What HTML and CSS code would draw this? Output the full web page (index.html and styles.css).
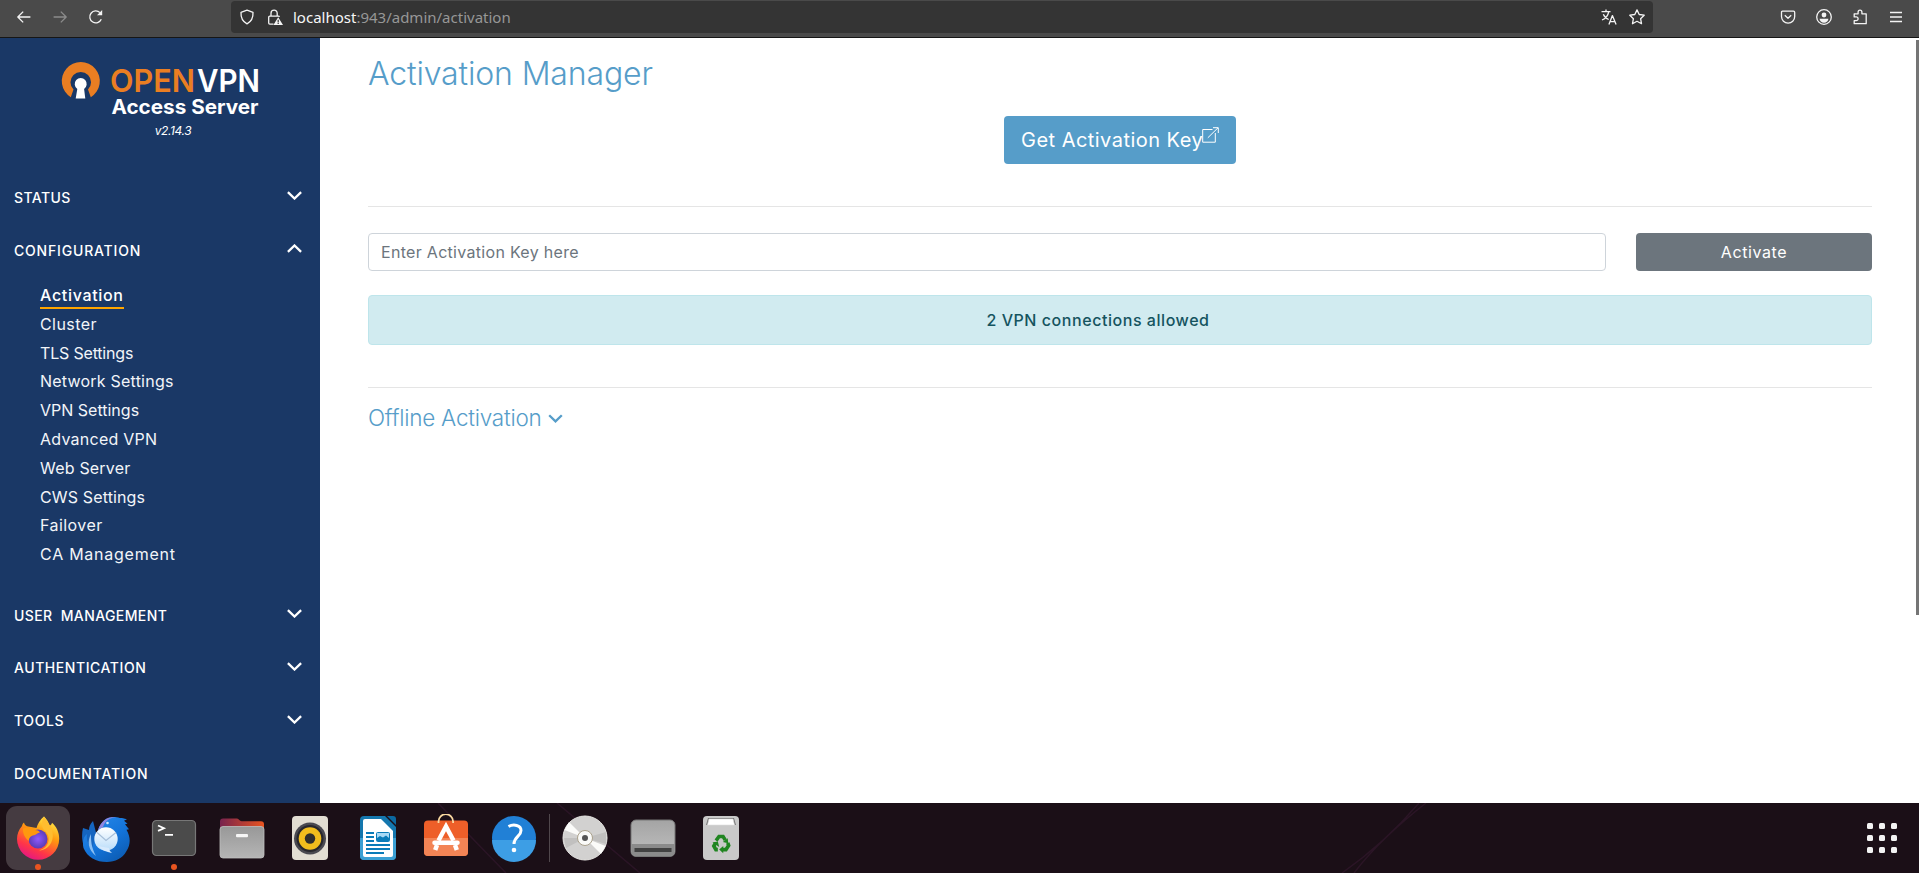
FILE: index.html
```html
<!DOCTYPE html>
<html lang="en">
<head>
<meta charset="utf-8">
<title>Activation Manager</title>
<link rel="stylesheet" href="styles.css">
</head>
<body>
<div class="screen">
  <header class="toolbar">
    <nav class="nav-buttons">
      <svg class="icon" viewBox="0 0 16 16"><path d="M14.4 8H2M7.2 2.6 1.8 8l5.4 5.4"/></svg>
      <svg class="icon icon-dim" viewBox="0 0 16 16"><path d="M1.6 8H14M8.8 2.6 14.2 8l-5.400 5.400"/></svg>
      <svg class="icon" viewBox="0 0 16 16"><path d="M13.300 10.300A6 6 0 1 1 12 3.600"/><path class="solid" d="M14.200 1v5.200H9z"/></svg>
    </nav>
    <div class="urlbar">
      <svg class="icon" viewBox="0 0 16 16"><path d="M8 1.200 14 3.300c.3 5.200-1.500 9.200-6 11.600C3.500 12.500 1.700 8.500 2 3.300z"/></svg>
      <svg class="icon lock" viewBox="0 0 16 16"><path d="M4 7V4.200a3 3 0 0 1 6.200 0V7M6.500 15.200H2.800a1.100 1.100 0 0 1-1.100-1.100V8.200A1.100 1.100 0 0 1 2.800 7.100h8.600a1 1 0 0 1 1 .8"/><path class="solid" fill-rule="evenodd" d="M11.200 8.200 16 16H6.400zM10.600 10.800v2.400h1.200v-2.400zm0 3v1.100h1.200v-1.100z"/></svg>
      <span class="url"><b>localhost</b>:943/admin/activation</span>
      <svg class="icon translate" viewBox="0 0 16 16"><path d="M.5 2.600h9M5 .6v2M2.300 5.200c1.200 2.700 3.200 4.500 5.400 5.300M7.700 2.800C7 6.500 4.500 9.500 1 11M7.900 15.400l3.500-8.800 3.700 8.800M9 12.600h5"/></svg>
      <svg class="icon" viewBox="0 0 16 16"><path d="m8 .9 2.200 4.600 5 .7-3.600 3.500.9 5L8 12.300l-4.500 2.400.9-5L.8 6.200l5-.7z"/></svg>
    </div>
    <div class="tools">
      <svg class="icon" viewBox="0 0 16 16"><path d="M2.500 2.200h11c.7 0 1.200.5 1.200 1.200v4.200a6.600 6.600 0 0 1-13.200 0V3.400c0-.7.4-1.200 1-1.200zM4.800 6.300 8 9.300l3.200-3"/></svg>
      <svg class="icon" viewBox="0 0 16 16"><circle cx="8" cy="8" r="7.300"/><circle class="solid" cx="8" cy="6" r="2.400"/><path class="solid" d="M3.600 9.800h8.800c0 2.300-2 4-4.400 4s-4.400-1.700-4.400-4z"/></svg>
      <svg class="icon" viewBox="0 0 16 16"><path d="M2.200 4.800h3.900V3a1.900 1.900 0 0 1 3.800 0v1.800h4.300v9.900h-12v-3h2a1.900 1.900 0 0 0 0-3.800h-2z"/></svg>
      <svg class="icon" viewBox="0 0 16 16"><path d="M2 3.500h12M2 8h12M2 12.500h12"/></svg>
    </div>
  </header>

  <div class="page">
    <aside class="sidebar">
      <svg class="logo" viewBox="0 0 320 90">
        <path fill="#ea7e22" d="M70.800 59.200A19 19 0 1 1 90.800 59.200L88 51.500A10.300 10.300 0 1 0 73.500 51.500Z"/>
        <path fill="#fff" d="M77.300 51a6 6 0 1 1 6.800 0L85.300 60.500h-9.600z"/>
        <text class="word" x="110" y="54" textLength="85" lengthAdjust="spacingAndGlyphs" fill="#ea7e22">OPEN</text>
        <text class="word" x="197" y="54" textLength="63" lengthAdjust="spacingAndGlyphs" fill="#fff">VPN</text>
        <text class="product" x="111.500" y="75.500" textLength="147" lengthAdjust="spacingAndGlyphs">Access Server</text>
      </svg>
      <div class="version">v2.14.3</div>
      <ul class="menu">
        <li class="group"><span class="t-status">STATUS</span><svg class="chev" viewBox="0 0 15 9"><path d="M.9 1.100 7.500 7.500 14.100 1.100"/></svg></li>
        <li class="group"><span class="t-config">CONFIGURATION</span><svg class="chev" viewBox="0 0 15 9"><path d="M.9 7.900 7.500 1.500 14.100 7.900"/></svg></li>
        <li>
          <ul class="submenu">
            <li><a class="active">Activation</a></li>
            <li><a class="s-cluster">Cluster</a></li>
            <li><a class="s-tls">TLS Settings</a></li>
            <li><a class="s-network">Network Settings</a></li>
            <li><a class="s-vpn">VPN Settings</a></li>
            <li><a class="s-advanced">Advanced VPN</a></li>
            <li><a class="s-web">Web Server</a></li>
            <li><a class="s-cws">CWS Settings</a></li>
            <li><a class="s-failover">Failover</a></li>
            <li><a class="s-ca">CA Management</a></li>
          </ul>
        </li>
        <li class="group"><span class="t-user">USER MANAGEMENT</span><svg class="chev" viewBox="0 0 15 9"><path d="M.9 1.100 7.500 7.500 14.100 1.100"/></svg></li>
        <li class="group"><span class="t-auth">AUTHENTICATION</span><svg class="chev" viewBox="0 0 15 9"><path d="M.9 1.100 7.500 7.500 14.100 1.100"/></svg></li>
        <li class="group"><span class="t-tools">TOOLS</span><svg class="chev" viewBox="0 0 15 9"><path d="M.9 1.100 7.500 7.500 14.100 1.100"/></svg></li>
        <li class="group"><span class="t-docs">DOCUMENTATION</span></li>
      </ul>
    </aside>

    <main class="content">
      <h1>Activation Manager</h1>
      <a class="get-key"><span>Get Activation Key</span><svg viewBox="0 0 17 16"><path d="M10.500 2.500H.7v12.700h12.600V6M5.800 10.800 16 .8M11 .7h5.300V6"/></svg></a>
      <hr>
      <div class="key-row">
        <div class="key-input">Enter Activation Key here</div>
        <div class="activate">Activate</div>
      </div>
      <div class="alert">2 VPN connections allowed</div>
      <hr>
      <h2><span>Offline Activation</span><svg viewBox="0 0 15 9"><path d="M1.200 1.200 7.500 7.400 13.800 1.200"/></svg></h2>
    </main>
    <div class="scrollbar"></div>
  </div>

  <footer class="dock">
    <svg class="dock-lines" viewBox="0 0 1919 70"><path d="M438 0 506 70M557 0 640 70M1419 0Q1385 40 1342 70M1426 0Q1380 36 1354 70"/></svg>
    <div class="app focused running">
      <svg viewBox="0 0 48 48">
        <defs>
          <linearGradient id="fx" x1=".8" y1="0" x2=".3" y2="1"><stop offset="0" stop-color="#fff44f"/><stop offset=".4" stop-color="#ff980e"/><stop offset=".75" stop-color="#ff3647"/><stop offset="1" stop-color="#e31587"/></linearGradient>
          <radialGradient id="fp"><stop offset="0" stop-color="#9059ff"/><stop offset="1" stop-color="#5b3cb5"/></radialGradient>
        </defs>
        <path fill="url(#fx)" d="M30 2.500c2.500 2.500 5 6 5.400 9.300 1.600-.4 2.300-1.700 2.600-3 4.500 4 7.200 9.500 7.200 16A21 21 0 0 1 24 45.800 21 21 0 0 1 3 25c0-5 1.600-9 5-13 .3-1.400.8-2.500 2-3.500.4 1.700 1.300 3 3 3.800l9.500 1.700C23.500 10 26 5.500 30 2.500z"/>
        <circle cx="24" cy="25" r="9.500" fill="url(#fp)"/>
        <path fill="#ff980e" d="M9 14.500c5-2 9-1 12 1.500 2 0 4.300.8 5 2.500-3 .5-4 2.500-6 2.700-3.500.4-5 3-5.300 5.800C11 24 8.500 19.500 9 14.500z"/>
        <path fill="#ffbd2f" d="M30 2.500c2.500 5 9.500 10 8.800 20-.5 9-7.800 14-13.800 14 11-3 12-14 6.500-19C27 13.500 27 8 30 2.500z"/>
      </svg>
    </div>
    <div class="app">
      <svg viewBox="0 0 48 48">
        <defs><linearGradient id="tb" x1="0" y1="0" x2=".7" y2="1"><stop offset="0" stop-color="#2a8bea"/><stop offset=".6" stop-color="#1373d9"/><stop offset="1" stop-color="#0d5db5"/></linearGradient><linearGradient id="mail" x1="0" y1="0" x2="0" y2="1"><stop offset="0" stop-color="#fff"/><stop offset="1" stop-color="#b9dcfa"/></linearGradient></defs>
        <path fill="#1565c0" d="M11 7C8 10 7 13 7 16L1 14C-1 22 0 33 6 39l12-5z"/>
        <path fill="url(#tb)" d="M16 16C19 7 25 2.500 33 3c3 .2 5 1.500 7 1l5 1.300-3 1.500 3.500 3-2.500.5 4 5-2.500.5c4 7 4.500 14.200 0 21.200C40.500 44.500 33 48 25 48 14 48 5.500 43.500 1.500 34 0 27 2 22 5 20c-1 6 1 11 5 14z"/>
        <path fill="#8e85df" d="M16 16C19 7 25 2.500 34 3c-7 1-11 4-13 10z"/>
        <path fill="#8bbef1" d="M9 20C5 27 6 36 14 42 9 33 9 26 9 20z"/>
        <circle cx="24" cy="25" r="11.700" fill="url(#mail)"/><path fill="#d7eafd" d="M16 32c4 4 8 6 14 7-2-2-3-3-3-5z"/>
        <path d="M15 18.500l9 8 10-8" fill="none" stroke="#a7bfd9" stroke-width="1.200"/><circle cx="25.500" cy="9" r="1.300" fill="#cfe9ff"/>
      </svg>
    </div>
    <div class="app running">
      <svg viewBox="0 0 48 48"><rect x="2.500" y="6.500" width="43" height="35" rx="4" fill="#4b4b4b" stroke="#777" stroke-width="1.200"/><path d="m8 11.500 6 2.700-6 2.700M15 20.800h8" fill="none" stroke="#fff" stroke-width="1.800"/></svg>
    </div>
    <div class="app">
      <svg viewBox="0 0 48 48">
        <defs><linearGradient id="fo"><stop offset="0" stop-color="#77224e"/><stop offset="1" stop-color="#e95420"/></linearGradient><linearGradient id="gr" x1="0" y1="0" x2="0" y2="1"><stop offset="0" stop-color="#989898"/><stop offset="1" stop-color="#b5b5b5"/></linearGradient></defs>
        <path fill="url(#fo)" d="M2 20V7.500a3 3 0 0 1 3-3h14c2 0 2.500 2.800 4.500 2.800H43a3 3 0 0 1 3 3V20z"/>
        <rect x="2" y="12.500" width="44" height="31.500" rx="3" fill="url(#gr)" stroke="#bfbfbf" stroke-width=".8"/><rect x="18" y="20" width="12" height="3.300" rx="1" fill="#f6f6f6"/>
      </svg>
    </div>
    <div class="app">
      <svg viewBox="0 0 48 48"><rect x="6" y="2" width="36" height="44" rx="4" fill="#e2ddd2"/><circle cx="24" cy="24.500" r="16" fill="#4a4950"/><circle cx="24" cy="24.500" r="13.500" fill="#28272d"/><circle cx="24" cy="24.500" r="11.300" fill="#f2bd1d"/><circle cx="24" cy="24.500" r="5.200" fill="#302f2d"/></svg>
    </div>
    <div class="app">
      <svg viewBox="0 0 48 48">
        <path fill="#1477ae" d="M10 2h21l11 11v29a4 4 0 0 1-4 4H10a4 4 0 0 1-4-4V6a4 4 0 0 1 4-4z"/><path fill="#3ba0d4" d="M6 24h36v18a4 4 0 0 1-4 4H10a4 4 0 0 1-4-4z"/>
        <path fill="#0b68a0" d="M33 2h6a3 3 0 0 1 3 3v6z"/><path fill="#fff" d="M11 5h16l12 12v24a2 2 0 0 1-2 2H11a2 2 0 0 1-2-2V7a2 2 0 0 1 2-2z"/>
        <path d="M12 19h8M12 23h8M12 27h8M12 31h24M12 35h24M12 39h18" stroke="#0b7bb8" stroke-width="1.900"/><rect x="22.500" y="18.500" width="13" height="9" rx="1" fill="#a9d9f5" stroke="#0b7bb8"/><path fill="#0b7bb8" d="M23 27v-3l3-2 3 1.500 3-2 3 2.500v3z"/>
      </svg>
    </div>
    <div class="app">
      <svg viewBox="0 0 48 48"><rect x="2" y="6.500" width="44" height="35.500" rx="4" fill="#ee5f29"/><path fill="#f38455" d="M2 24h44v14a4 4 0 0 1-4 4H6a4 4 0 0 1-4-4z"/><path d="M16.500 9V7.500a7.300 7.300 0 0 1 14.600 0V9" fill="none" stroke="#f9d9a0" stroke-width="1.800"/><g fill="none" stroke="#fff" stroke-width="4.500"><path d="M16.500 26.500 24 12.500l7.500 14M15 31l-1.800 5M33 31l1.800 5"/><path d="M12.500 28.700h23" stroke-linecap="round"/></g></svg>
    </div>
    <div class="app">
      <svg viewBox="0 0 48 48"><circle cx="24" cy="24" r="22" fill="#2180d6"/><path fill="#3d9ee5" d="M2 26h44a22 22 0 0 1-44 0z"/><path d="M18.500 12.500c5-2.700 12.500-1.500 12.500 4 0 6-7 6-7 13.500" fill="none" stroke="#fff" stroke-width="3"/><circle cx="24" cy="36" r="2.300" fill="#fff"/></svg>
    </div>
    <div class="separator"></div>
    <div class="app">
      <svg viewBox="0 0 48 48"><circle cx="24" cy="24" r="22" fill="#d2d1d0" stroke="#e8e7e4"/><path fill="#c1c0bf" d="M24 24 45 18v12zM24 24 3 24l2 10z"/><path fill="#fbfbf9" d="m24 24-20.500-8 4.500-8zM24 24l20.500 8-4.500 8z"/><circle cx="24" cy="24" r="7.500" fill="#fafaf8" stroke="#aaa18c"/><circle cx="24" cy="24" r="3" fill="#555"/></svg>
    </div>
    <div class="app">
      <svg viewBox="0 0 48 48"><defs><linearGradient id="dr" x1="0" y1="0" x2="0" y2="1"><stop offset="0" stop-color="#a4a4a4"/><stop offset="1" stop-color="#bfbfbf"/></linearGradient></defs><rect x="2" y="6" width="44" height="36.500" rx="5" fill="url(#dr)" stroke="#777"/><path fill="#8b8b8b" d="M2.500 30h43v8a4 4 0 0 1-4 4h-35a4 4 0 0 1-4-4z"/><rect x="5.500" y="34" width="37" height="4" fill="#424242"/></svg>
    </div>
    <div class="app">
      <svg viewBox="0 0 48 48"><rect x="6" y="2" width="36" height="44" rx="4" fill="#c9c9c9"/><path fill="#777" d="M11 4h26l2 7H9z"/><path fill="#fff" stroke="#ddd" stroke-width=".6" d="M12 5h24l1.500 6h-27z"/><g transform="translate(2.400 2.300) scale(.9)"><g fill="none" stroke="#208521" stroke-width="4"><path d="m18.500 27 3.300-4.500h4.500l2.500 4M31.500 29.500l1 3-3 4.500H25M20.500 37h-2.200L16 33l2-3.500"/></g><path fill="#208521" d="m26 28.500 5.500-4 .5 5.500zM26.500 33v8l-4.500-4zM14.500 29l6-1 1.500 6z"/></g></svg>
    </div>
    <div class="apps-grid"><i></i><i></i><i></i><i></i><i></i><i></i><i></i><i></i><i></i></div>
  </footer>
</div>
</body>
</html>
```
FILE: styles.css
```css
* { box-sizing: border-box; }
body { margin: 0; }
ul { list-style: none; margin: 0; padding: 0; }
svg { display: block; flex: none; }

.screen {
  width: 1919px;
  height: 873px;
  display: flex;
  flex-direction: column;
  overflow: hidden;
  font-family: Inter, "Open Sans", sans-serif;
  font-size: 16px;
}

/* Browser toolbar */
.toolbar {
  height: 38px;
  flex: none;
  display: flex;
  align-items: flex-start;
  background: #4a4a4a;
  border-bottom: 1px solid #161616;
}
.icon {
  width: 16px;
  height: 16px;
  fill: none;
  stroke: #f4f4f4;
  stroke-width: 1.3;
  stroke-linejoin: round;
}
.icon .solid { fill: #f4f4f4; stroke: none; }
.icon-dim { stroke: #8c8c8c; }
.nav-buttons {
  width: 231px;
  display: flex;
  gap: 20px;
  padding: 9px 0 0 16px;
}
.urlbar {
  width: 1422px;
  height: 32px;
  margin-top: 1px;
  padding: 0 8px;
  display: flex;
  align-items: center;
  background: #343434;
  border-radius: 4px;
}
.lock { margin-left: 12px; }
.url {
  flex: 1;
  margin-left: 10px;
  font-family: "Noto Sans", sans-serif;
  font-size: 15px;
  letter-spacing: 0;
  color: #979797;
}
.url b { font-weight: 400; color: #f7f7f7; }
.translate { margin-right: 12px; }
.tools {
  display: flex;
  gap: 20px;
  padding: 9px 0 0 127px;
}

/* Page */
.page {
  height: 765px;
  flex: none;
  display: flex;
  background: #fff;
}
.sidebar {
  width: 320px;
  background: #1a3866;
  color: #fff;
}
.logo { width: 320px; height: 90px; }
.word { font: 600 31.500px Inter, sans-serif; }
.product { font: 700 20px Inter, sans-serif; fill: #fff; }
.version {
  width: 346px;
  margin-top: -5px;
  line-height: 16px;
  text-align: center;
  font-size: 12px;
  font-style: italic;
  letter-spacing: -0.4px;
}
.menu { padding-top: 32px; }
.group {
  height: 52.700px;
  padding: 0 18px 0 14px;
  display: flex;
  align-items: center;
  justify-content: space-between;
  font-size: 14px;
  font-weight: 500;
}
.t-status { letter-spacing: 0.4px; }
.t-config { letter-spacing: 0.81px; }
.t-user { letter-spacing: 0.4px; word-spacing: 4px; }
.t-auth { letter-spacing: 0.56px; }
.t-tools { letter-spacing: 0.6px; }
.t-docs { letter-spacing: 0.78px; }
.chev {
  width: 15px;
  height: 9px;
  margin-bottom: 3px;
  fill: none;
  stroke: #fff;
  stroke-width: 2.300;
}
.submenu { padding: 4.600px 0 20px 40px; }
.submenu li { height: 28.800px; line-height: 28.800px; }
.submenu a { display: inline-block; height: 28px; color: #f2f5f9; }
.submenu .active { font-weight: 500; letter-spacing: 0.68px; color: #fff; border-bottom: 2px solid #ffa500; }
.submenu .s-cluster { letter-spacing: 0.42px; }
.submenu .s-tls { letter-spacing: -0.18px; }
.submenu .s-network { letter-spacing: 0.22px; }
.submenu .s-advanced { letter-spacing: 0.25px; }
.submenu .s-web { letter-spacing: 0.2px; }
.submenu .s-cws { letter-spacing: 0.14px; }
.submenu .s-failover { letter-spacing: 0.45px; }
.submenu .s-ca { letter-spacing: 0.75px; }

.content {
  width: 1504px;
  margin-left: 48px;
  color: #569dc9;
}
h1 {
  height: 78px;
  margin: 0;
  padding-top: 16px;
  font: 300 32px/40px Inter, sans-serif;
  letter-spacing: -0.14px;
}
.get-key {
  width: 232px;
  height: 48px;
  margin: 0 auto;
  padding: 0 17px;
  display: flex;
  align-items: center;
  background: #569dc9;
  border-radius: 4px;
  color: #fff;
  font-size: 20px;
}
.get-key span { width: 181px; white-space: nowrap; letter-spacing: 0.47px; }
.get-key svg { width: 17px; height: 16px; margin-bottom: 11px; fill: none; stroke: #fff; }
hr { height: 1px; margin: 42px 0 0; border: 0; background: #e5e5e5; }
.key-row { margin-top: 26px; display: flex; gap: 30px; }
.key-input {
  flex: 1;
  height: 38px;
  padding-left: 12px;
  line-height: 36px;
  letter-spacing: 0.3px;
  border: 1px solid #ced4da;
  border-radius: 4px;
  color: #6c757d;
}
.activate {
  width: 236px;
  line-height: 38px;
  text-align: center;
  letter-spacing: 0.6px;
  background: #6c757d;
  border-radius: 4px;
  color: #fff;
}
.alert {
  height: 50px;
  margin-top: 24px;
  padding: 0 64px 0 20px;
  line-height: 48px;
  text-align: center;
  font-weight: 500;
  letter-spacing: 0.55px;
  background: #d1ebf0;
  border: 1px solid #bee5eb;
  border-radius: 4px;
  color: #15545f;
}
h2 {
  margin: 15px 0 0;
  display: flex;
  align-items: center;
  gap: 6px;
  font: 300 22.500px/30px Inter, sans-serif;
  letter-spacing: -0.24px;
}
h2 svg { width: 15px; height: 9px; fill: none; stroke: #569dc9; stroke-width: 2.300; }
.scrollbar {
  width: 3px;
  height: 575px;
  margin: 2px 0 0 auto;
  background: #757575;
}

/* Dock */
.dock {
  position: relative;
  height: 70px;
  display: flex;
  align-items: center;
  gap: 4px;
  padding-left: 6px;
  background: #1b0f17;
}
.dock-lines {
  position: absolute;
  inset: 0;
  width: 1919px;
  height: 70px;
  fill: none;
  stroke: #2b1526;
  stroke-width: 1.500;
}
.app {
  position: relative;
  width: 64px;
  height: 64px;
  padding: 8px;
  border-radius: 11px;
}
.app svg { width: 48px; height: 48px; }
.focused { background: #453b41; }
.running::after {
  content: "";
  position: absolute;
  left: 29px;
  bottom: 0;
  width: 6px;
  height: 6px;
  border-radius: 50%;
  background: #e95420;
}
.separator { width: 1px; height: 48px; margin-left: -1px; margin-right: -1px; background: #50474c; }
.apps-grid {
  display: grid;
  grid-template-columns: repeat(3, 6px);
  gap: 6px;
  margin: 0 22px 0 auto;
}
.apps-grid i { height: 6px; border-radius: 1.500px; background: #f3f3f3; }
```
